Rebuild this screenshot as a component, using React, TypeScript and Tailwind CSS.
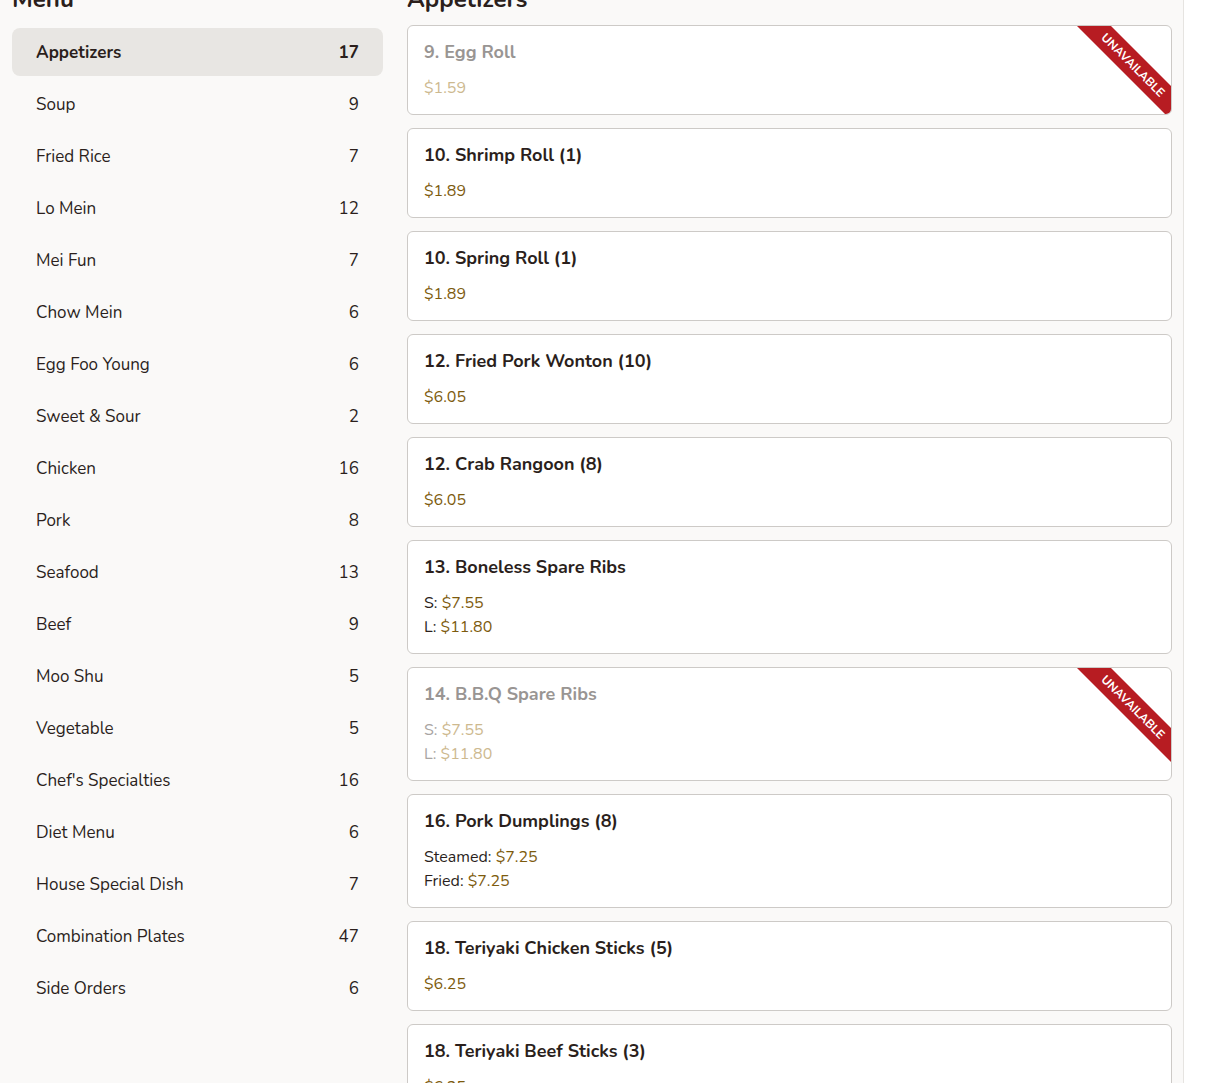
const categories: [string, number][] = [
  ['Appetizers', 17],
  ['Soup', 9],
  ['Fried Rice', 7],
  ['Lo Mein', 12],
  ['Mei Fun', 7],
  ['Chow Mein', 6],
  ['Egg Foo Young', 6],
  ['Sweet & Sour', 2],
  ['Chicken', 16],
  ['Pork', 8],
  ['Seafood', 13],
  ['Beef', 9],
  ['Moo Shu', 5],
  ['Vegetable', 5],
  ["Chef's Specialties", 16],
  ['Diet Menu', 6],
  ['House Special Dish', 7],
  ['Combination Plates', 47],
  ['Side Orders', 6],
];

interface Item {
  name: string;
  prices: { label?: string; value: string }[];
  unavailable?: boolean;
}

const items: Item[] = [
  { name: '9. Egg Roll', prices: [{ value: '$1.59' }], unavailable: true },
  { name: '10. Shrimp Roll (1)', prices: [{ value: '$1.89' }] },
  { name: '10. Spring Roll (1)', prices: [{ value: '$1.89' }] },
  { name: '12. Fried Pork Wonton (10)', prices: [{ value: '$6.05' }] },
  { name: '12. Crab Rangoon (8)', prices: [{ value: '$6.05' }] },
  {
    name: '13. Boneless Spare Ribs',
    prices: [
      { label: 'S', value: '$7.55' },
      { label: 'L', value: '$11.80' },
    ],
  },
  {
    name: '14. B.B.Q Spare Ribs',
    prices: [
      { label: 'S', value: '$7.55' },
      { label: 'L', value: '$11.80' },
    ],
    unavailable: true,
  },
  {
    name: '16. Pork Dumplings (8)',
    prices: [
      { label: 'Steamed', value: '$7.25' },
      { label: 'Fried', value: '$7.25' },
    ],
  },
  { name: '18. Teriyaki Chicken Sticks (5)', prices: [{ value: '$6.25' }] },
  { name: '18. Teriyaki Beef Sticks (3)', prices: [{ value: '$6.25' }] },
];

function MenuCard({ item }: { item: Item }) {
  const off = item.unavailable;
  return (
    <div className="relative overflow-hidden rounded-md border border-[#cdcac7] bg-white px-4 pb-[14px] pt-4">
      <div className={`text-[18px] font-bold leading-[20px] ${off ? 'text-[#999593]' : 'text-[#2b1f1c]'}`}>
        {item.name}
      </div>
      <div className="mt-[14px]">
        {item.prices.map((p, i) => (
          <div key={i} className="text-[16px] leading-[24px]">
            {p.label && <span className={off ? 'text-[#a9a5a3]' : 'text-[#2b1f1c]'}>{p.label}: </span>}
            <span className={off ? 'text-[#cdb98f]' : 'text-[#7d5b0e]'}>{p.value}</span>
          </div>
        ))}
      </div>

      {/* Ribbon */}
      {off && (
        <div className="absolute right-[-42px] top-[27px] flex h-[24px] w-[160px] rotate-45 items-center justify-center bg-[#b71c22] text-[12px] font-bold uppercase tracking-normal text-white">
          Unavailable
        </div>
      )}
    </div>
  );
}

export default function App() {
  return (
    <div className="flex h-[1083px] w-full overflow-hidden bg-white font-['Nunito','Lato',sans-serif] text-[#2b1f1c]">
      <div className="flex flex-1 gap-6 border-r border-[#e6e4e1] bg-[#faf9f8] pl-3 pr-[11px]">
        {/* Sidebar */}
        <aside className="w-[371px] shrink-0">
          <h2 className="-mt-[17px] mb-[13px] text-[24px] font-bold leading-[32px]">Menu</h2>
          <nav className="flex flex-col gap-1">
            {categories.map(([name, count], i) => (
              <div
                key={name}
                className={`flex h-12 items-center justify-between rounded-lg px-6 pt-[2px] text-[17px] ${
                  i === 0 ? 'bg-[#e8e6e3] font-bold' : ''
                }`}
              >
                <span>{name}</span>
                <span>{count}</span>
              </div>
            ))}
          </nav>
        </aside>

        {/* Items */}
        <main className="min-w-0 flex-1">
          <h2 className="-mt-[17px] mb-[10px] text-[24px] font-bold leading-[32px]">Appetizers</h2>
          <div className="flex flex-col gap-[13px]">
            {items.map((item) => (
              <MenuCard key={item.name} item={item} />
            ))}
          </div>
        </main>
      </div>
      <div className="w-10 shrink-0" />
    </div>
  );
}
